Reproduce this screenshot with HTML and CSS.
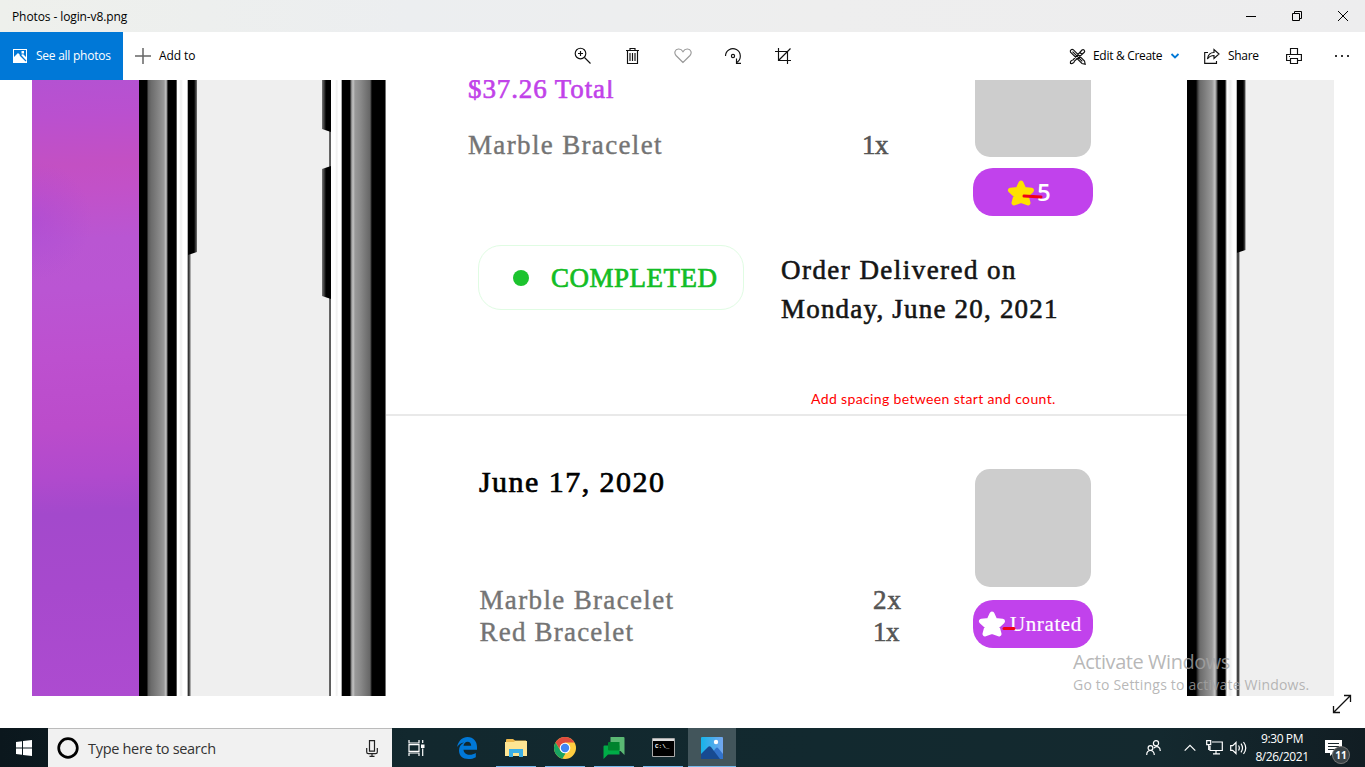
FILE: index.html
```html
<!DOCTYPE html>
<html lang="en">
<head>
<meta charset="utf-8">
<title>Photos - login-v8.png</title>
<link rel="stylesheet" href="styles.css">
</head>
<body>
<header class="titlebar">
  <span class="title">Photos - login-v8.png</span>
  <div class="window-controls">
    <svg width="12" height="12" viewBox="0 0 12 12"><path d="M1 6.500h10"/></svg>
    <svg width="12" height="12" viewBox="0 0 12 12"><path d="M1.500 3.500h7v7h-7zM3.500 3.500v-2h7v7h-2"/></svg>
    <svg width="12" height="12" viewBox="0 0 12 12"><path d="M1 1l10 10M11 1L1 11"/></svg>
  </div>
</header>
<nav class="toolbar">
  <div class="all-photos">
    <svg width="14" height="14" viewBox="0 0 14 14"><path fill="#fff" fill-rule="evenodd" d="M0 0h14v14H0zM1 1v7l4-4 8 8V1z"/><path fill="#fff" d="M1 10l4-4 7 7H1zM8.500 2h2.500v2.500H8.500zM8 6l2-1 3 3v4z"/><path d="M7 6l6 6" stroke="#0078d7"/></svg>
    <span>See all photos</span>
  </div>
  <div class="add-to">
    <svg width="16" height="16" viewBox="0 0 16 16"><path d="M0 8h16M8 0v16" stroke="#666" stroke-width="1.500"/></svg>
    <span>Add to</span>
  </div>
  <div class="tools">
    <svg width="18" height="18" viewBox="0 0 18 18"><circle cx="6.500" cy="6.500" r="5.300"/><path d="M10.500 10.500l6 6M4 6.500h5M6.500 4v5"/></svg>
    <svg width="18" height="18" viewBox="0 0 18 18"><path d="M2 3.500h13M6 3.500v-2h5v2M3.500 3.500v13h10v-13M6 6v8M8.500 6v8M11 6v8"/></svg>
    <svg class="muted" width="18" height="18" viewBox="0 0 18 18"><path d="M9 15.500L2 8.500C-.2 6 1 2.200 4.500 2 6.500 1.900 8 3 9 4.700 10 3 11.500 1.900 13.500 2 17 2.200 18.200 6 16 8.500z"/></svg>
    <svg width="18" height="18" viewBox="0 0 18 18"><path d="M1.500 9a7.400 7.400 0 1 1 11.500 6.200M12.500 11.500v4.800h4.500"/><circle cx="9" cy="9" r="1.600"/></svg>
    <svg width="18" height="18" viewBox="0 0 18 18"><path d="M4.500 1v12.500H17M1 4.500h12.500V17M4.500 13.500L16.500 1.500"/></svg>
  </div>
  <div class="actions">
    <div class="edit">
      <svg width="17" height="17" viewBox="0 0 17 17"><path d="M1.500 4.200c-.8-1.700 1.200-3.500 2.700-2.500L15.500 13l.7 3.200-3.200-.7zM3.500 3.700l9.800 9.600M1.500 15.500c-.5-2 .6-3.300 2.500-3.500L13 2c1.500-1.200 3.500.8 2.300 2.300L5.500 13c-.3 1.900-2 2.900-4 2.500zM11 4.500l2 2"/></svg>
      <span>Edit &amp; Create</span>
      <svg class="chevron" width="10" height="8" viewBox="0 0 10 8"><path d="M1.500 2L5 5.500 8.500 2"/></svg>
    </div>
    <div class="share">
      <svg width="16" height="16" viewBox="0 0 16 16"><path d="M4 4.500H.7v10.800h11.800V13M3.500 11c.5-4 3-6.500 6.500-6.500V1.500l5 4.500-5 4.500v-3c-2.800 0-4.700.8-6.500 3.500z"/></svg>
      <span>Share</span>
    </div>
    <svg class="print" width="16" height="16" viewBox="0 0 16 16"><path d="M4.500 6.500v-6h7v6M4 12.500H.6v-6h14.800v6H12M4.500 10.500h7v5h-7zM3 8.500h1"/></svg>
    <svg class="more" width="16" height="4" viewBox="0 0 16 4"><path d="M1 1h2v2H1zM7 1h2v2H7zM13 1h2v2h-2z"/></svg>
  </div>
</nav>
<main class="stage">
  <div class="photo">
    <div class="backdrop"></div>
    <div class="frame frame-left"></div>
    <div class="gap">
      <i class="key key-a"></i><i class="key key-b"></i><i class="key key-c"></i>
    </div>
    <div class="frame frame-mid"></div>
    <div class="screen">
      <section class="order order-first">
        <div class="summary">
          <div class="lines">
            <p class="total">$37.26 Total</p>
            <p class="item"><span class="name">Marble Bracelet</span><span class="qty one">1x</span></p>
          </div>
          <div class="product">
            <div class="thumb thumb-cut"></div>
            <div class="badge rated">
              <svg width="28" height="28" viewBox="0 0 28 28"><path class="star" fill="#ffe100" stroke="#ffe100" d="M14 4l3 6.500 7.500.8-5.500 5 2 7.700-7-2.500L7 24l2-7.700-5.500-5 7.500-.8z"/></svg>
              <span>5</span>
              <svg class="mark" width="22" height="5" viewBox="0 0 22 5"><path d="M2 2l17 1"/></svg>
            </div>
          </div>
        </div>
        <div class="status">
          <div class="pill"><i></i><span>COMPLETED</span></div>
          <p class="delivered"><span class="d1">Order Delivered on</span><br><span class="d2">Monday, June 20, 2021</span></p>
        </div>
        <p class="note">Add spacing between start and count.</p>
      </section>
      <section class="order order-second">
        <div class="lines">
          <h2>June 17, 2020</h2>
          <p class="item"><span class="name">Marble Bracelet</span><span class="qty">2x</span></p>
          <p class="item"><span class="name red-name">Red Bracelet</span><span class="qty one">1x</span></p>
        </div>
        <div class="product">
          <div class="thumb"></div>
          <div class="badge unrated">
            <svg width="28" height="28" viewBox="0 0 28 28"><path class="star" fill="#fff" stroke="#fff" d="M14 4l3 6.500 7.500.8-5.500 5 2 7.700-7-2.500L7 24l2-7.700-5.500-5 7.500-.8z"/></svg>
            <span>Unrated</span>
            <svg class="mark" width="16" height="5" viewBox="0 0 16 5"><path d="M2 2.500h10"/></svg>
          </div>
        </div>
      </section>
    </div>
    <div class="frame frame-right"></div>
    <div class="edge"><i class="key key-d"></i></div>
  </div>
  <svg class="expand" width="20" height="20" viewBox="0 0 20 20"><path d="M1.500 18.500l17-17M12 1.500h6.500V8M1.500 12v6.500H8"/></svg>
  <div class="watermark"><p class="w1">Activate Windows</p><p class="w2">Go to Settings to activate Windows.</p></div>
</main>
<footer class="taskbar">
  <div class="start"><svg width="16" height="16" viewBox="0 0 16 16"><path fill="#fff" d="M0 2l6-.8v6.300H0zM7 1.100L16 0v7.500H7zM0 8.500h6v6.300L0 14zM7 8.500h9V16l-9-1.100z"/></svg></div>
  <div class="search">
    <svg width="22" height="22" viewBox="0 0 22 22"><circle cx="11" cy="11" r="9.300" fill="none" stroke="#000" stroke-width="2.700"/></svg>
    <span>Type here to search</span>
    <svg class="mic" width="12" height="17" viewBox="0 0 12 17"><path d="M3.500.6h5v10.500h-5zM.7 8v4q0 1.600 1.600 1.600h7.400q1.600 0 1.600-1.600V8M6 13.600v2.600M3.500 16.300h5"/></svg>
  </div>
  <div class="apps">
    <div class="app task-view"><svg width="18" height="16" viewBox="0 0 18 16"><path fill="none" stroke="#fff" stroke-width="1.200" d="M1 0v3h10V0M1 16v-3h10v3M1 4.700h10v6.600H1zM14.700 0v3M14.700 8.500V16"/><path fill="#fff" d="M13 4.500h3.500V8H13z"/></svg></div>
    <div class="app"><svg width="22" height="22" viewBox="0 0 22 22"><path fill="#0078d7" d="M1 10C2.500 3.500 6.500 0 11.500 0 17.500 0 21 4.500 21 10v2.700H7.500c.3 3.400 3 5 6 5 2.500 0 4.500-.7 6.300-1.800v4.300C17.500 21.500 15.200 22 12.500 22 6.500 22 3 18.500 3 13.500c0-3.500 1.800-6.300 5-8C5 6 2.500 7.700 1 10zm6.500-1.200h7.700c0-2.300-1.200-4-3.600-4-2.300 0-3.800 1.700-4.100 4z"/></svg></div>
    <div class="app open"><svg width="22" height="20" viewBox="0 0 22 20"><path fill="#eeb94d" d="M1 2q0-1 1-1h6l2 1.500h11V5H1z"/><path fill="#ffe693" d="M0 4h9l1-1h12v15H0z"/><path fill="#3cb0e6" d="M4 11h14v8h-4v-4H8v4H4z"/></svg></div>
    <div class="app open"><svg width="22" height="22" viewBox="0 0 22 22"><circle cx="11" cy="11" r="11" fill="#ffcd40"/><path fill="#df4b3f" d="M1.500 5.500A11 11 0 0 1 20.500 5.500H11L6.500 13.500z"/><path fill="#19a361" d="M1.500 5.500l5 8.300 5 2.700-3.200 5.200A11 11 0 0 1 1.500 5.500z"/><circle cx="11" cy="11" r="5.300" fill="#fff"/><circle cx="11" cy="11" r="4.200" fill="#4285f4"/></svg></div>
    <div class="app open"><svg width="22" height="22" viewBox="0 0 22 22"><path fill="#5bb974" d="M7.500 0h13q1 0 1 1v17l-4-4h-10z"/><path fill="#00ac47" d="M1.500 8.500h15v9H5L.5 22V9.500q0-1 1-1z"/><path fill="#00832d" d="M6 5h10.500v8.500H6q-1 0-1-1V6q0-1 1-1z"/></svg></div>
    <div class="app open"><svg width="23" height="19" viewBox="0 0 23 19"><path d="M.5.500h22v18H.5z" fill="#000" stroke="#aaa"/><path d="M1 1h21v2H1z" fill="#ddd"/><text class="prompt" x="3" y="9.500">C:\_</text></svg></div>
    <div class="app open active"><svg width="22" height="22" viewBox="0 0 22 22"><defs><linearGradient id="sky"><stop stop-color="#16b4e9"/><stop offset="1" stop-color="#74a6ee"/></linearGradient></defs><rect width="22" height="22" rx="1" fill="url(#sky)"/><path fill="#3273cb" d="M11 16l4-5q1-1 2 0l5 6v5H11z"/><path fill="#174a91" d="M0 17l7-7q1.500-1.500 3 0l9 12H0z"/><circle cx="15" cy="5" r="2.200" fill="#fff"/></svg></div>
  </div>
  <div class="tray">
    <svg width="15" height="16" viewBox="0 0 15 16"><circle cx="4.500" cy="8" r="2.400"/><circle cx="10" cy="3.300" r="2.600"/><path d="M.7 15c0-6 7.600-6 7.600 0M8 8c2.700-3 6.300-1 6.300 3"/></svg>
    <svg class="up" width="12" height="8" viewBox="0 0 12 8"><path d="M.7 6.700L6 1.400l5.300 5.300"/></svg>
    <svg class="net" width="17" height="15" viewBox="0 0 17 15"><path d="M6 2h10.300v8.500H4V6M10 10.500v3M7 13.800h7M.7.700h4v4h-4zM2.700 5v5"/></svg>
    <svg class="vol" width="17" height="14" viewBox="0 0 17 14"><path d="M.7 4.700h2L6 1.500v11L2.700 9.300h-2zM8.500 4.500q1.700 2.500 0 5M11 2.700q3 4.300 0 8.600M13.500 1q4.500 6 0 12"/></svg>
    <div class="clock"><span>9:30 PM</span><span class="date">8/26/2021</span></div>
    <div class="notify"><svg width="17" height="16" viewBox="0 0 17 16"><path fill="#fff" stroke="none" d="M0 0h17v13H8l-3 3v-3H0z"/><path stroke="#17252b" d="M3 3.500h11M3 6.500h11M3 9.500h7"/></svg><b>11</b></div>
  </div>
</footer>
</body>
</html>
```
FILE: styles.css
```css
* { box-sizing: border-box; }
body { margin: 0; width: 1365px; height: 767px; overflow: hidden; display: flex; flex-direction: column; background: #fff; color: #000; font: 12px "Open Sans", "Noto Sans", sans-serif; }
p, h2 { margin: 0; font-weight: normal; }
svg { display: block; flex: none; }
span { white-space: nowrap; }

.titlebar { height: 32px; display: flex; align-items: center; justify-content: space-between; padding: 0 16px 0 12px; background: linear-gradient(90deg, #eef0ec, #eceef0 30%, #eeeeee 60%, #ededee); }
.title { letter-spacing: -0.1px; }
.window-controls { display: flex; gap: 34px; }
.window-controls svg { fill: none; stroke: #000; }

.toolbar { height: 48px; display: flex; align-items: center; }
.toolbar span { line-height: 16px; padding-bottom: 1px; }
.toolbar svg { fill: none; stroke: #111; stroke-width: 1.15; }
.all-photos { width: 123px; height: 48px; display: flex; align-items: center; gap: 9px; padding-left: 13px; background: #0078d7; color: #fff; letter-spacing: -0.25px; }
.all-photos svg { stroke: none; }
.add-to { width: 451px; display: flex; align-items: center; gap: 8px; padding-left: 12px; letter-spacing: -.1px; }
.tools { display: flex; gap: 32px; width: 495px; }
.tools .muted { stroke: #999; }
.actions { display: flex; align-items: center; letter-spacing: -0.3px; }
.edit { width: 135px; display: flex; align-items: center; gap: 8px; }
.edit span { margin-left: -1px; }
.toolbar .chevron { stroke: #0078d7; stroke-width: 1.8; }
.share { width: 82px; display: flex; align-items: center; gap: 8px; }
.toolbar .more { fill: #333; stroke: none; margin-left: 32px; }

.stage { height: 648px; position: relative; padding-left: 32px; }
.photo { width: 1302px; height: 616px; display: flex; overflow: hidden; }
.backdrop { width: 107px; background: radial-gradient(circle at 0 140px, rgba(165,72,215,.45), transparent 60px), linear-gradient(177deg, #b452d2 0, #ba50cf 6%, #c350c3 14%, #c251c8 18%, #b956d2 26%, #ba55d3 34%, #bd50cf 45%, #bb4ccb 56%, #b14acd 64%, #a349cc 70%, #a749cd 82%, #ad4bd0 100%); }
.frame { flex: none; }
.frame-left { width: 49px; background: linear-gradient(90deg, #000 8px, #555 9px, #6b6b6b 12px, #8d8d8d 22px, #999 25px, #c5c5c5 27px, #777 28px, #000 29px, #000 37px, #fff 38.500px, #fff 40px, #eee 42px, #fff 44px, #fff 48px, #666 49px); }
.gap { width: 143px; position: relative; background: linear-gradient(90deg, #333 1px, #aaa 2.500px, #efefef 3px, #efefef 140.500px, #999 141px, #333 142px, #888 143px); }
.frame-mid { width: 55px; background: linear-gradient(90deg, #fff 4px, #eee 6px, #fff 7px, #fff 10px, #000 11.500px, #000 19px, #777 20px, #c5c5c5 22px, #999 24px, #888 30px, #666 39px, #333 40px, #000 41px, #000 53.500px, #aaa 55px); }
.key { position: absolute; display: block; background: linear-gradient(90deg, #000 6px, #222 7px, #777 9px); }
.key-a { left: 0; top: 0; width: 9px; height: 175px; clip-path: polygon(0 0, 100% 0, 100% 172px, 0 100%); }
.key-b, .key-c { right: 0; width: 9px; background: linear-gradient(90deg, #777, #222 3px, #000 4px); }
.key-b { top: 0; height: 52px; clip-path: polygon(0 0, 100% 0, 100% 100%, 0 49px); }
.key-c { top: 86px; height: 133px; clip-path: polygon(0 3px, 100% 0, 100% 100%, 0 130px); }
.frame-right { width: 50px; background: linear-gradient(90deg, #000 9px, #444 11px, #6b6b6b 13px, #999 25px, #c5c5c5 28px, #555 30px, #000 31px, #000 38px, #fff 40px, #eee 43px, #fff 46px, #fff 49px, #777 50px); }
.edge { flex: 1; position: relative; background: linear-gradient(90deg, #444 2px, #aaa 2.500px, #efefef 3px); }
.key-d { left: 0; top: 0; width: 9px; height: 173px; clip-path: polygon(0 0, 100% 0, 100% 170px, 0 100%); }

.screen { width: 800.5px; flex: none; font-family: "Liberation Serif", serif; font-size: 27px; }
.order-first { height: 335.5px; border-bottom: 2px solid #e9e9e9; padding-left: 82px; }
.summary { height: 165px; display: flex; }
.lines { width: 505px; flex: none; }
.total { color: #c142e9; line-height: 19px; height: 49px; letter-spacing: .9px; -webkit-text-stroke: .6px #c142e9; }
.item { display: flex; line-height: 32px; color: #747474; -webkit-text-stroke: .4px #747474; }
.name { width: 394px; letter-spacing: 1.35px; }
.red-name { letter-spacing: 1.2px; }
.qty { color: #555; -webkit-text-stroke: .6px #555; letter-spacing: 1px; }
.one { letter-spacing: -.5px; }
.product { width: 119.5px; }
.thumb { height: 118px; margin: 0 2px; background: #cdcdcd; border-radius: 15px; }
.thumb-cut { height: 77px; border-radius: 0 0 15px 15px; }
.badge { position: relative; height: 48px; display: flex; align-items: center; background: #c142ec; border-radius: 20px; color: #fff; }
.star { stroke-width: 5; stroke-linejoin: round; }
.rated { margin-top: 11px; padding-left: 34px; gap: 2px; font: 600 24px "Open Sans", sans-serif; }
.rated span { padding-bottom: 1px; }
.rated svg:first-child { margin-top: 2px; }
.mark { position: absolute; fill: none; stroke: #f00018; stroke-width: 3; stroke-linecap: round; }
.rated .mark { left: 49px; top: 26px; }
.status { display: flex; padding-left: 10px; gap: 37px; height: 134px; }
.pill { width: 266px; height: 65px; border: 1.5px solid #e0fce3; border-radius: 23px; display: flex; align-items: center; padding-left: 34px; gap: 22px; color: #13bd25; letter-spacing: .5px; -webkit-text-stroke: .7px #13bd25; }
.pill i { width: 16px; height: 16px; border-radius: 50%; background: #1cc32e; }
.pill span { padding-top: 2px; }
.delivered { line-height: 39px; margin-top: 6px; color: #151515; -webkit-text-stroke: .6px #151515; }
.d1 { letter-spacing: 1.45px; }
.d2 { letter-spacing: 1.2px; }
.note { padding-left: 343px; margin-top: 10px; line-height: 20px; font-family: Lato, sans-serif; font-size: 14px; letter-spacing: .36px; color: #f00; }
.order-second { display: flex; padding: 53.5px 0 0 93px; }
.order-second .lines { width: 494px; }
.order-second .name { padding-left: .5px; }
h2 { height: 115px; font-size: 30px; line-height: 26px; letter-spacing: 1.45px; -webkit-text-stroke: .7px #000; }
.unrated { margin-top: 13px; padding-left: 5px; gap: 4px; font-size: 21px; letter-spacing: .6px; -webkit-text-stroke: .2px #fff; }
.unrated .mark { left: 29px; top: 26px; }
.expand { position: absolute; right: 13px; bottom: 14px; fill: none; stroke: #111; stroke-width: 1.3; }
.watermark { position: absolute; left: 1073px; top: 569px; color: rgba(165,165,165,.8); }
.w1 { font-size: 20px; line-height: 26px; letter-spacing: -.45px; }
.w2 { font-size: 14px; line-height: 20px; letter-spacing: .2px; }

.taskbar { height: 39px; display: flex; background: linear-gradient(90deg, #0b171d, #12282e 30%, #12292f 60%, #14292f 85%, #111d23); color: #fff; }
.start { width: 48px; display: flex; align-items: center; justify-content: center; }
.search { width: 344px; display: flex; align-items: center; gap: 9px; padding: 0 14px 0 9px; background: #f1f1f1; border-top: 1px solid #bbb; color: #333; font-size: 14.500px; }
.search span { flex: 1; letter-spacing: -.3px; }
.mic { fill: none; stroke: #222; stroke-width: 1.2; }
.apps { display: flex; gap: 1px; }
.app { width: 48px; height: 39px; display: flex; align-items: center; justify-content: center; }
.task-view { width: 50px; padding-right: 1px; }
.open { position: relative; }
.open::after { content: ""; position: absolute; left: 4px; right: 4px; bottom: 0; height: 1px; background: #76b9ed; }
.active { background: #42555b; }
.active::after { left: 0; right: 0; }
.prompt { font: bold 6px "Liberation Mono", monospace; fill: #fff; }
.tray { margin-left: auto; display: flex; align-items: center; padding-right: 15px; }
.tray svg { fill: none; stroke: #fff; stroke-width: 1.2; }
.up { margin-left: 23px; }
.net { margin-left: 10px; }
.vol { margin-left: 7px; }
.clock { width: 70px; margin-right: 8px; display: flex; flex-direction: column; align-items: center; line-height: 18px; letter-spacing: -.4px; }
.notify { position: relative; width: 25px; }
.notify b { position: absolute; left: 8px; top: 7px; width: 16px; height: 16px; border-radius: 50%; background: #3a4347; box-shadow: 0 0 0 1px #777; font-size: 10px; line-height: 16px; text-align: center; }
```
